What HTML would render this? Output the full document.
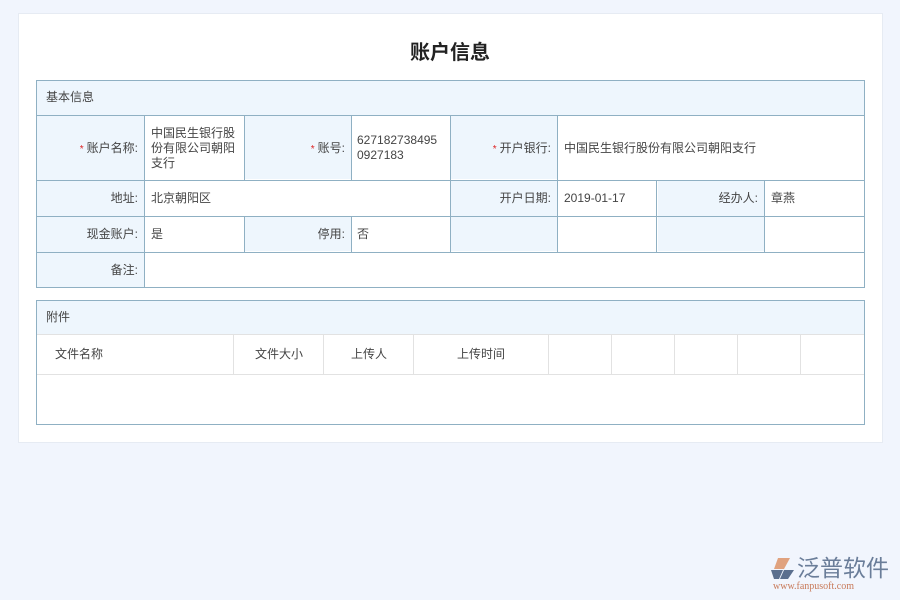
<!DOCTYPE html>
<html><head><meta charset="utf-8"><style>
*{margin:0;padding:0;box-sizing:border-box}
body{width:900px;height:600px;background:#f1f5fd;font-family:"Liberation Sans","Noto Sans CJK SC",sans-serif;font-size:12px;color:#444;position:relative;overflow:hidden}
.card{position:absolute;left:18px;top:13px;width:865px;height:430px;background:#fff;border:1px solid #e6ebf3}
.title{position:absolute;left:0;right:0;top:40px;text-align:center;font-size:20px;font-weight:bold;color:#222;line-height:26px}
.a{position:absolute;}
.bl{position:absolute;border-left:1px solid #8fb0c3}
.bt{position:absolute;border-top:1px solid #8fb0c3}
.lab{position:absolute;background:#eef6fd}
.t{position:absolute;line-height:15px}
.r{text-align:right}
.s{color:#d22;font-size:10px;margin-right:3px}
.gl{position:absolute;border-left:1px solid #e2e2e2}
.gt{position:absolute;border-top:1px solid #e2e2e2}
</style></head><body>
<div class="card"></div>
<div class="title">账户信息</div>

<div class="a" style="left:36px;top:80px;width:829px;height:208px;border:1px solid #8fb0c3"></div>
<div class="lab" style="left:37px;top:81px;width:827px;height:34px"></div>
<div class="lab" style="left:37px;top:116px;width:107px;height:171px"></div>
<div class="lab" style="left:245px;top:116px;width:106px;height:63px"></div>
<div class="lab" style="left:245px;top:217px;width:106px;height:34px"></div>
<div class="lab" style="left:451px;top:116px;width:106px;height:63px"></div>
<div class="lab" style="left:451px;top:181px;width:106px;height:70px"></div>
<div class="lab" style="left:658px;top:181px;width:106px;height:70px"></div>
<div class="bt" style="left:36px;top:115px;width:829px"></div>
<div class="bt" style="left:36px;top:180px;width:829px"></div>
<div class="bt" style="left:36px;top:216px;width:829px"></div>
<div class="bt" style="left:36px;top:252px;width:829px"></div>
<div class="bl" style="left:144px;top:115px;height:173px"></div>
<div class="bl" style="left:244px;top:115px;height:65px"></div>
<div class="bl" style="left:244px;top:216px;height:36px"></div>
<div class="bl" style="left:351px;top:115px;height:65px"></div>
<div class="bl" style="left:351px;top:216px;height:36px"></div>
<div class="bl" style="left:450px;top:115px;height:137px"></div>
<div class="bl" style="left:557px;top:115px;height:137px"></div>
<div class="bl" style="left:656px;top:180px;height:72px"></div>
<div class="bl" style="left:764px;top:180px;height:72px"></div>

<div class="t" style="left:46px;top:90px">基本信息</div>
<div class="t r" style="left:40px;top:141px;width:98px"><span class="s">*</span>账户名称:</div>
<div class="t" style="left:151px;top:126px;width:90px">中国民生银行股份有限公司朝阳支行</div>
<div class="t r" style="left:248px;top:141px;width:97px"><span class="s">*</span>账号:</div>
<div class="t" style="left:357px;top:133px">627182738495<br>0927183</div>
<div class="t r" style="left:454px;top:141px;width:97px"><span class="s">*</span>开户银行:</div>
<div class="t" style="left:564px;top:141px">中国民生银行股份有限公司朝阳支行</div>
<div class="t r" style="left:40px;top:191px;width:98px">地址:</div>
<div class="t" style="left:151px;top:191px">北京朝阳区</div>
<div class="t r" style="left:454px;top:191px;width:97px">开户日期:</div>
<div class="t" style="left:564px;top:191px">2019-01-17</div>
<div class="t r" style="left:660px;top:191px;width:98px">经办人:</div>
<div class="t" style="left:771px;top:191px">章燕</div>
<div class="t r" style="left:40px;top:227px;width:98px">现金账户:</div>
<div class="t" style="left:151px;top:227px">是</div>
<div class="t r" style="left:248px;top:227px;width:97px">停用:</div>
<div class="t" style="left:357px;top:227px">否</div>
<div class="t r" style="left:40px;top:263px;width:98px">备注:</div>

<div class="a" style="left:36px;top:300px;width:829px;height:125px;border:1px solid #8fb0c3"></div>
<div class="lab" style="left:37px;top:301px;width:827px;height:33px"></div>
<div class="gt" style="left:37px;top:334px;width:827px"></div>
<div class="gt" style="left:37px;top:374px;width:827px"></div>
<div class="gl" style="left:233px;top:334px;height:40px"></div>
<div class="gl" style="left:323px;top:334px;height:40px"></div>
<div class="gl" style="left:413px;top:334px;height:40px"></div>
<div class="gl" style="left:548px;top:334px;height:40px"></div>
<div class="gl" style="left:611px;top:334px;height:40px"></div>
<div class="gl" style="left:674px;top:334px;height:40px"></div>
<div class="gl" style="left:737px;top:334px;height:40px"></div>
<div class="gl" style="left:800px;top:334px;height:40px"></div>
<div class="t" style="left:46px;top:310px">附件</div>
<div class="t" style="left:55px;top:347px">文件名称</div>
<div class="t" style="left:255px;top:347px">文件大小</div>
<div class="t" style="left:351px;top:347px">上传人</div>
<div class="t" style="left:457px;top:347px">上传时间</div>

<svg class="a" style="left:770px;top:557px" width="26" height="24" viewBox="0 0 26 24">
<path d="M8 1 L20 1 L14 12 L4 12 Z" fill="#e0a27f"/>
<path d="M1 13 L13 13 L9 22 L4 22 Z M14 13 L24 13 L18 22 L10 22 Z" fill="#5b6f8e"/>
</svg>
<div class="a" style="left:797px;top:555px;font-size:23px;color:#6a7d99;letter-spacing:0px;line-height:26px">泛普软件</div>
<div class="a" style="left:773px;top:581px;font-size:10px;color:#c87a5a;font-family:'Liberation Serif',serif;line-height:12px">www.fanpusoft.com</div>
</body></html>
